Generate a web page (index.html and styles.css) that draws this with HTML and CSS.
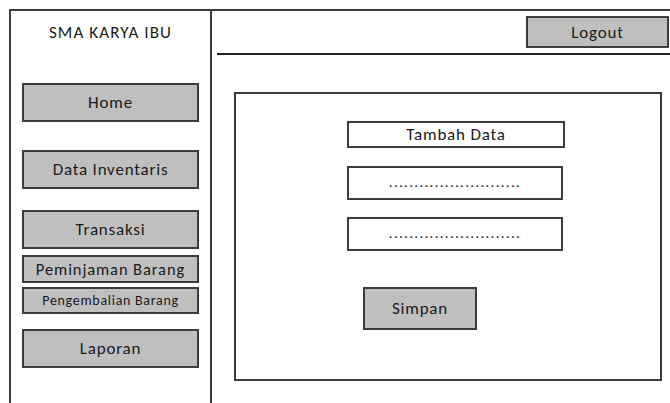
FILE: index.html
```html
<!DOCTYPE html>
<html lang="id">
<head>
    <meta charset="UTF-8">
    <meta name="viewport" content="width=device-width, initial-scale=1.0">
    <title>SMA Karya Ibu - Tambah Data</title>
    <link rel="stylesheet" href="styles.css">
</head>
<body>

    <div class="frame">
        <div class="sidebar">
            <div class="school">SMA KARYA IBU</div>
            <div class="nav-btn home">Home</div>
            <div class="nav-btn data">Data Inventaris</div>
            <div class="nav-btn trans">Transaksi</div>
            <div class="nav-btn sub pinjam">Peminjaman Barang</div>
            <div class="nav-btn sub kembali">Pengembalian Barang</div>
            <div class="nav-btn laporan">Laporan</div>
        </div>

        <div class="main">
            <div class="topbar">
                <div class="logout">Logout</div>
            </div>

            <div class="panel">
                <div class="panel-title">Tambah Data</div>
                <div class="field first">..........................</div>
                <div class="field second">..........................</div>
                <div class="save">Simpan</div>
            </div>
        </div>
    </div>

</body>
</html>
```

FILE: styles.css
```css
body{
    margin: 0;
    background: #fff;
    color: #1a1a1a;
    font-family: Carlito, Lato, "Liberation Sans", sans-serif;
    font-size: 17px;
    letter-spacing: 0.8px;
}
.frame{
    display: flex;
    margin: 9px 0 0 9px;
    height: 394px;
    border-top: 2px solid #3c3c3c;
    border-left: 2px solid #3c3c3c;
}
.sidebar{
    width: 177px;
    padding: 0 11px;
    border-right: 2px solid #3c3c3c;
    display: flex;
    flex-direction: column;
}
.school{
    height: 43px;
    line-height: 43px;
    text-align: center;
    letter-spacing: 1.1px;
}
.nav-btn{
    box-sizing: border-box;
    height: 39px;
    background: #bfbfbf;
    border: 2px solid #3c3c3c;
    display: flex;
    align-items: center;
    justify-content: center;
    white-space: nowrap;
}
.home{ margin-top: 29px; }
.data{ margin-top: 28px; }
.trans{ margin-top: 21px; }
.pinjam{
    margin-top: 6px;
    height: 28px;
    font-size: 16.5px;
    letter-spacing: 0.9px;
}
.kembali{
    margin-top: 4px;
    height: 27px;
    font-size: 14px;
    letter-spacing: 0.7px;
}
.laporan{ margin-top: 15px; }

.main{
    flex: 1;
    display: flex;
    flex-direction: column;
}
.topbar{
    margin-left: 5px;
    padding: 5px 1px 5px 0;
    border-bottom: 2px solid #222;
    display: flex;
    justify-content: flex-end;
}
.logout{
    box-sizing: border-box;
    width: 143px;
    height: 32px;
    background: #bfbfbf;
    border: 2px solid #3c3c3c;
    display: flex;
    align-items: center;
    justify-content: center;
}
.panel{
    box-sizing: border-box;
    margin: 37px 8px 0 22px;
    height: 289px;
    border: 2px solid #3c3c3c;
    display: flex;
    flex-direction: column;
    align-items: flex-start;
}
.panel-title, .field, .save{
    box-sizing: border-box;
    border: 2px solid #3c3c3c;
    display: flex;
    align-items: center;
    justify-content: center;
}
.panel-title{
    margin: 27px 0 0 111px;
    width: 218px;
    height: 27px;
}
.field{
    margin-left: 111px;
    width: 216px;
    height: 34px;
    font-size: 15px;
    letter-spacing: 1.3px;
    padding-bottom: 2px;
}
.first{ margin-top: 18px; }
.second{ margin-top: 17px; }
.save{
    margin: 36px 0 0 127px;
    width: 114px;
    height: 43px;
    background: #bfbfbf;
}
```
